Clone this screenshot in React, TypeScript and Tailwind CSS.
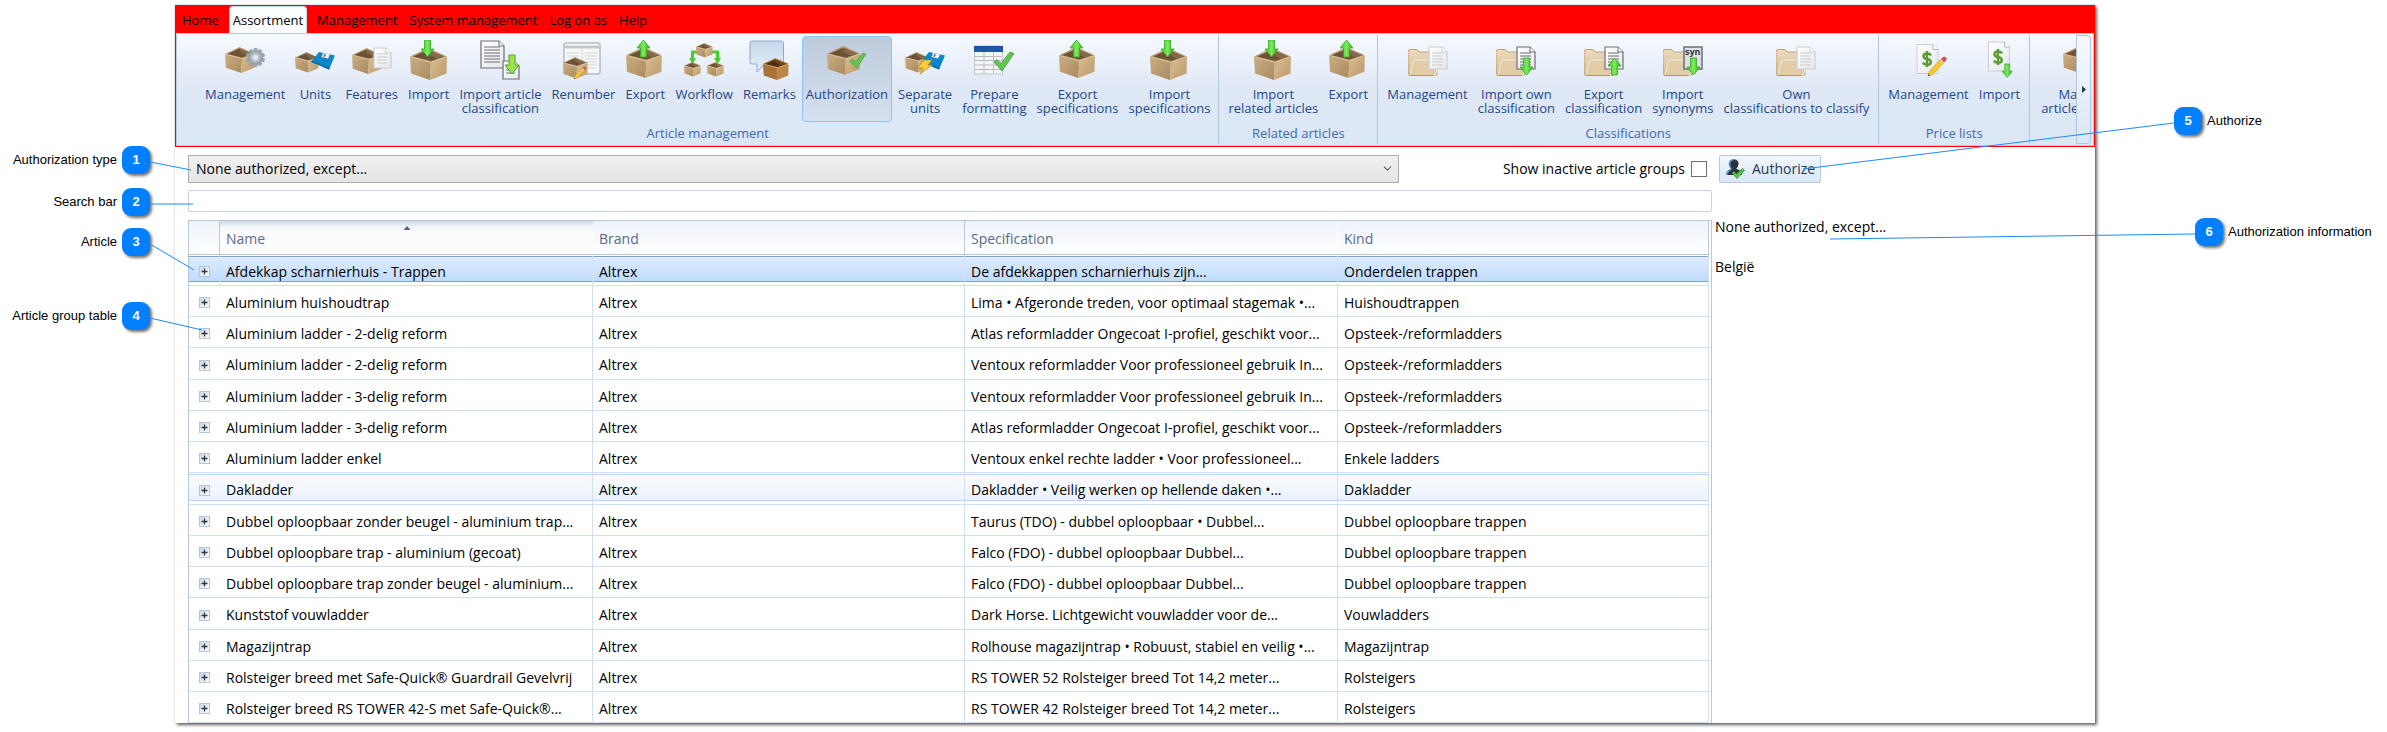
import React, { useState } from 'react';
import { ChevronDown } from 'lucide-react';

interface RibbonItem {
  label: string[];
  icon: React.ReactNode;
  active?: boolean;
}

interface RibbonGroup {
  title: string;
  items: RibbonItem[];
}

interface Article {
  name: string;
  specification: string;
  kind: string;
  state?: 'selected' | 'hover';
}

/* ---------- Icon parts, drawn on a 40x40 grid ---------- */

const IconDefs = () => (
  <svg className="absolute" width="0" height="0" aria-hidden="true">
    <defs>
      <linearGradient id="boxLeft" x1="0" y1="0" x2="1" y2="1">
        <stop offset="0" stopColor="#ccae82" />
        <stop offset="1" stopColor="#a98a5e" />
      </linearGradient>
      <linearGradient id="boxRight" x1="0" y1="0" x2="1" y2="1">
        <stop offset="0" stopColor="#d8bd92" />
        <stop offset="1" stopColor="#bd9a6b" />
      </linearGradient>
      <linearGradient id="green" x1="0" y1="0" x2="1" y2="0">
        <stop offset="0" stopColor="#3fc42a" />
        <stop offset="0.5" stopColor="#7bea5c" />
        <stop offset="1" stopColor="#2fae1c" />
      </linearGradient>
      <linearGradient id="folder" x1="0" y1="0" x2="0" y2="1">
        <stop offset="0" stopColor="#eddcbf" />
        <stop offset="1" stopColor="#d3b98f" />
      </linearGradient>
      <linearGradient id="bubble" x1="0" y1="0" x2="0" y2="1">
        <stop offset="0" stopColor="#c3d8ea" />
        <stop offset="1" stopColor="#e6f0f9" />
      </linearGradient>
      <linearGradient id="sheet" x1="0" y1="0" x2="1" y2="1">
        <stop offset="0" stopColor="#ffffff" />
        <stop offset="1" stopColor="#e4e6e8" />
      </linearGradient>
    </defs>
  </svg>
);

const Box = ({ x = 0, y = 0, s = 1, dark = false }: { x?: number; y?: number; s?: number; dark?: boolean }) => (
  <g transform={`translate(${x} ${y}) scale(${s})`}>
    <path d="M0 8.5 L18 0 L37 8.5 L21 14.5 Z" fill={dark ? '#b98345' : '#b99a6e'} />
    <path d="M3 8.6 L18 2 L34 8.6 L21 13 Z" fill={dark ? '#4a2e12' : '#6b5236'} />
    <path d="M18 2 L34 8.6 L27 11 L18 6 Z" fill={dark ? '#6d4720' : '#84694a'} />
    <path d="M0 8.5 L21 14.5 L20 32 L1 25.5 Z" fill={dark ? '#a8723a' : 'url(#boxLeft)'} />
    <path d="M37 8.5 L21 14.5 L20 32 L36.5 25.5 Z" fill={dark ? '#bd8447' : 'url(#boxRight)'} />
    <path d="M0 8.5 L21 14.5 L37 8.5" fill="none" stroke={dark ? '#d3a568' : '#dcc6a0'} strokeWidth="0.8" />
  </g>
);

const ArrowDown = ({ x, y, s = 1 }: { x: number; y: number; s?: number }) => (
  <path
    transform={`translate(${x} ${y}) scale(${s})`}
    d="M3.5 0 H9.5 V9 H13 L6.5 17 L0 9 H3.5 Z"
    fill="url(#green)"
    stroke="#35a821"
    strokeWidth="0.8"
  />
);

const ArrowUp = ({ x, y, s = 1 }: { x: number; y: number; s?: number }) => (
  <path
    transform={`translate(${x} ${y}) scale(${s})`}
    d="M3.5 17 H9.5 V8 H13 L6.5 0 L0 8 H3.5 Z"
    fill="url(#green)"
    stroke="#35a821"
    strokeWidth="0.8"
  />
);

const Sheet = ({ x, y, w, h, stroke = '#c9cdd1' }: { x: number; y: number; w: number; h: number; stroke?: string }) => {
  const lines = [];
  for (let ly = y + 6; ly < y + h - 3; ly += 3) lines.push(ly);
  return (
    <g>
      <path
        d={`M${x} ${y} H${x + w - 5} L${x + w} ${y + 5} V${y + h} H${x} Z`}
        fill="url(#sheet)"
        stroke={stroke}
        strokeWidth="1.2"
      />
      <path d={`M${x + w - 5} ${y} V${y + 5} H${x + w}`} fill="#ffffff" stroke={stroke} />
      {lines.map((ly) => (
        <path key={ly} d={`M${x + 3} ${ly} H${x + w - 4}`} stroke={stroke} strokeWidth="1" />
      ))}
    </g>
  );
};

const Floppy = () => (
  <g>
    <path d="M24 12 L40 15.5 L34 29.5 L28 27 L27 25 L16 22 Z" fill="#0b86c9" />
    <path d="M16 22 L34 29.5 L35 28 L17 20.5 Z" fill="#0a6ca6" />
    <path d="M28 13 L35 14.5 L33 18.5 L26.5 17 Z" fill="#eef4f8" />
    <path d="M29 14 L31 14.5 L30 17 L28 16.5 Z" fill="#c4545c" />
  </g>
);

const Check = ({ x, y, s = 1 }: { x: number; y: number; s?: number }) => (
  <path
    transform={`translate(${x} ${y}) scale(${s})`}
    d="M0 10 L3 7.5 L7 11.5 L16 0 L20 1.5 L8 19 Z"
    fill="#62c653"
    stroke="#3f9a3c"
    strokeWidth="0.8"
  />
);

const Pencil = ({ x, y }: { x: number; y: number }) => (
  <g transform={`translate(${x} ${y})`}>
    <path d="M0 20 L1.5 15 L13 3 L16 6.5 L4.5 18.5 Z" fill="#f5c92f" stroke="#c49a1c" strokeWidth="0.6" />
    <path d="M13 3 L15 1 Q17 0 18.5 2 Q19 3.5 18 4.5 L16 6.5 Z" fill="#dd4a50" />
    <path d="M12 4 L13 3 L16 6.5 L15 7.5 Z" fill="#cfd5da" />
    <path d="M0 20 L0.5 18 L2 19.5 Z" fill="#333333" />
  </g>
);

const Folder = () => (
  <g>
    <path d="M0 12 Q0 9.5 2 9.5 H9 L11 12 H29 V35 H2 Q0 35 0 33 Z" fill="url(#folder)" stroke="#bfa277" />
    <path d="M5 22 Q5.5 20 7.5 20 H31 L28 33.5 Q27.5 35.5 25 35.5 H2 Z" fill="#e2cca6" stroke="#f8efdf" />
    <path d="M1 35.5 H26" stroke="#b3956a" />
  </g>
);

const Dollar = ({ x, y }: { x: number; y: number }) => (
  <path
    transform={`translate(${x} ${y})`}
    d="M5 0 V16 M9 4.5 Q8 2.5 5 2.5 Q1.5 2.5 1.5 5.2 Q1.5 7.5 5 8 Q8.8 8.6 8.8 11 Q8.8 13.7 5 13.7 Q2 13.7 1 11.5"
    fill="none"
    stroke="#5b9a35"
    strokeWidth="2.4"
  />
);

const Gear = () => (
  <g fill="#9aa5ad">
    {[0, 36, 72, 108, 144].map((a) => (
      <rect key={a} x="28.5" y="8" width="4" height="19" rx="1" transform={`rotate(${a} 30.5 17.5)`} />
    ))}
    <circle cx="30.5" cy="17.5" r="7.5" />
    <circle cx="30.5" cy="17.5" r="5" fill="#b9c2c8" />
    <circle cx="30.5" cy="17.5" r="2.5" fill="#e5ebf1" />
  </g>
);

const Icon = ({ children }: { children: React.ReactNode }) => (
  <svg className="w-10 h-10 shrink-0" viewBox="0 0 40 40" aria-hidden="true">
    {children}
  </svg>
);

const importIcon = <Icon><Box x={1} y={8} /><ArrowDown x={12} y={0} /></Icon>;
const exportIcon = <Icon><Box x={1} y={7} s={0.97} /><ArrowUp x={12} y={0} /></Icon>;

const groups: RibbonGroup[] = [
  {
    title: 'Article management',
    items: [
      { label: ['Management'], icon: <Icon><Box y={7} s={0.81} /><Gear /></Icon> },
      { label: ['Units'], icon: <Icon><Box y={12} s={0.64} /><Floppy /></Icon> },
      { label: ['Features'], icon: <Icon><Box y={8} s={0.81} /><Sheet x={22} y={8} w={17} h={20} /></Icon> },
      { label: ['Import'], icon: importIcon },
      {
        label: ['Import article', 'classification'],
        icon: (
          <Icon>
            <Sheet x={1} y={1} w={23} h={27} stroke="#6b6f73" />
            <Sheet x={23} y={21} w={16} h={18} stroke="#6b6f73" />
            <path d="M29 15 H35 V25 H39 L32 34 L25 25 H29 Z" fill="#9be24f" stroke="#57a41f" />
          </Icon>
        ),
      },
      {
        label: ['Renumber'],
        icon: (
          <Icon>
            <rect x="1" y="3" width="36" height="31" rx="2" fill="#f7f8f9" stroke="#b8bcc0" strokeWidth="1.5" />
            <path d="M2 7 H37" stroke="#c6cacd" strokeWidth="3" />
            <path d="M19 9 V33 M4 13 H16 M4 16 H16 M22 13 H34 M22 16 H34 M22 19 H34 M22 22 H34 M22 25 H34 M22 28 H34" stroke="#cfd2d5" />
            <Box x={0} y={17} s={0.67} />
            <g transform="translate(11 26) scale(0.65)"><Pencil x={0} y={0} /></g>
          </Icon>
        ),
      },
      { label: ['Export'], icon: exportIcon },
      {
        label: ['Workflow'],
        icon: (
          <Icon>
            <path d="M13 12 H8.5 V21 M28 12 H33.5 V21" fill="none" stroke="#45cf2b" strokeWidth="3" />
            <path d="M5 18 H12 L8.5 24 Z M30 18 H37 L33.5 24 Z" fill="#45cf2b" />
            <Box x={12} y={3} s={0.45} />
            <Box x={0} y={22} s={0.45} />
            <Box x={23} y={22} s={0.45} />
          </Icon>
        ),
      },
      {
        label: ['Remarks'],
        icon: (
          <Icon>
            <path
              d="M3 1 H32 Q34.5 1 34.5 3 V22 Q34.5 24 32 24 H15 L8 32 V24 H3 Q1 24 1 22 V3 Q1 1 3 1 Z"
              fill="url(#bubble)"
              stroke="#8fa9c6"
            />
            <Box x={14} y={18} s={0.69} dark />
          </Icon>
        ),
      },
      {
        label: ['Authorization'],
        active: true,
        icon: <Icon><Box x={0} y={6} s={0.9} /><Check x={23} y={13} s={0.8} /></Icon>,
      },
      {
        label: ['Separate', 'units'],
        icon: (
          <Icon>
            <Box y={12} s={0.64} />
            <Floppy />
            <path d="M18 20 L27 20 L23 25 L27 25 L15 34 L18 28 L13 28 Z" fill="#f8cf3c" stroke="#b98a1c" strokeWidth="0.8" />
          </Icon>
        ),
      },
      {
        label: ['Prepare', 'formatting'],
        icon: (
          <Icon>
            <rect x="0.5" y="6" width="28" height="28" fill="#f3f4f5" stroke="#c3c6c9" />
            <path d="M0 16.5 H28 M0 20.5 H28 M0 25 H28 M0 29.5 H28 M10 12 V34 M19.5 12 V34" stroke="#b9bdc1" />
            <rect x="0" y="6" width="29" height="6" fill="#1f56a5" />
            <Check x={20} y={12} />
          </Icon>
        ),
      },
      { label: ['Export', 'specifications'], icon: exportIcon },
      { label: ['Import', 'specifications'], icon: importIcon },
    ],
  },
  {
    title: 'Related articles',
    items: [
      { label: ['Import', 'related articles'], icon: importIcon },
      { label: ['Export'], icon: exportIcon },
    ],
  },
  {
    title: 'Classifications',
    items: [
      { label: ['Management'], icon: <Icon><Folder /><Sheet x={21} y={7} w={18} h={22} /></Icon> },
      {
        label: ['Import own', 'classification'],
        icon: <Icon><Folder /><Sheet x={21} y={7} w={18} h={22} stroke="#6b6f73" /><ArrowDown x={24} y={18} /></Icon>,
      },
      {
        label: ['Export', 'classification'],
        icon: <Icon><Folder /><Sheet x={21} y={7} w={18} h={22} stroke="#6b6f73" /><ArrowUp x={24} y={18} /></Icon>,
      },
      {
        label: ['Import', 'synonyms'],
        icon: (
          <Icon>
            <Folder />
            <rect x="21" y="7" width="18" height="22" fill="#dfe2e4" stroke="#6b6f73" strokeWidth="1.5" />
            <text x="22" y="15" fontSize="9" fontWeight="700" fill="#33373a">syn</text>
            <ArrowDown x={24} y={18} />
          </Icon>
        ),
      },
      {
        label: ['Own', 'classifications to classify'],
        icon: <Icon><Folder /><Sheet x={21} y={7} w={18} h={22} /></Icon>,
      },
    ],
  },
  {
    title: 'Price lists',
    items: [
      {
        label: ['Management'],
        icon: (
          <Icon>
            <path d="M8 4.5 H24 L29 9.5 V33.5 H8 Z" fill="url(#sheet)" stroke="#c9cdd1" />
            <path d="M24 4.5 V9.5 H29" fill="#ffffff" stroke="#b4b8bc" />
            <Dollar x={13} y={11} />
            <Pencil x={19} y={16} />
          </Icon>
        ),
      },
      {
        label: ['Import'],
        icon: (
          <Icon>
            <path d="M9.5 2 H25.5 L30.5 7 V31 H9.5 Z" fill="url(#sheet)" stroke="#c9cdd1" />
            <path d="M25.5 2 V7 H30.5" fill="#ffffff" stroke="#b4b8bc" />
            <Dollar x={14} y={9} />
            <ArrowDown x={23} y={24} s={0.8} />
          </Icon>
        ),
      },
    ],
  },
];

const articles: Article[] = [
  { name: 'Afdekkap scharnierhuis - Trappen', specification: 'De afdekkappen scharnierhuis zijn...', kind: 'Onderdelen trappen', state: 'selected' },
  { name: 'Aluminium huishoudtrap', specification: 'Lima • Afgeronde treden, voor optimaal stagemak •...', kind: 'Huishoudtrappen' },
  { name: 'Aluminium ladder - 2-delig reform', specification: 'Atlas reformladder Ongecoat I-profiel, geschikt voor...', kind: 'Opsteek-/reformladders' },
  { name: 'Aluminium ladder - 2-delig reform', specification: 'Ventoux reformladder Voor professioneel gebruik In...', kind: 'Opsteek-/reformladders' },
  { name: 'Aluminium ladder - 3-delig reform', specification: 'Ventoux reformladder Voor professioneel gebruik In...', kind: 'Opsteek-/reformladders' },
  { name: 'Aluminium ladder - 3-delig reform', specification: 'Atlas reformladder Ongecoat I-profiel, geschikt voor...', kind: 'Opsteek-/reformladders' },
  { name: 'Aluminium ladder enkel', specification: 'Ventoux enkel rechte ladder • Voor professioneel...', kind: 'Enkele ladders' },
  { name: 'Dakladder', specification: 'Dakladder • Veilig werken op hellende daken •...', kind: 'Dakladder', state: 'hover' },
  { name: 'Dubbel oploopbaar zonder beugel - aluminium trap...', specification: 'Taurus (TDO) - dubbel oploopbaar • Dubbel...', kind: 'Dubbel oploopbare trappen' },
  { name: 'Dubbel oploopbare trap - aluminium (gecoat)', specification: 'Falco (FDO) - dubbel oploopbaar Dubbel...', kind: 'Dubbel oploopbare trappen' },
  { name: 'Dubbel oploopbare trap zonder beugel - aluminium...', specification: 'Falco (FDO) - dubbel oploopbaar Dubbel...', kind: 'Dubbel oploopbare trappen' },
  { name: 'Kunststof vouwladder', specification: 'Dark Horse. Lichtgewicht vouwladder voor de...', kind: 'Vouwladders' },
  { name: 'Magazijntrap', specification: 'Rolhouse magazijntrap • Robuust, stabiel en veilig •...', kind: 'Magazijntrap' },
  { name: 'Rolsteiger breed met Safe-Quick® Guardrail Gevelvrij', specification: 'RS TOWER 52 Rolsteiger breed Tot 14,2 meter...', kind: 'Rolsteigers' },
  { name: 'Rolsteiger breed RS TOWER 42-S met Safe-Quick®...', specification: 'RS TOWER 42 Rolsteiger breed Tot 14,2 meter...', kind: 'Rolsteigers' },
];

const tabs = ['Home', 'Assortment', 'Management', 'System management', 'Log on as', 'Help'];

const RibbonButton = ({ item }: { item: RibbonItem }) => (
  <button
    className={`flex flex-col items-center h-[86px] pt-[3px] rounded-sm border text-[13px] leading-[14px] text-[#1e478c] whitespace-nowrap ${
      item.active
        ? 'mx-px px-[3px] border-[#8fc1f7] bg-linear-to-b from-[#becbdb] to-[#d5e1ef]'
        : 'px-1 border-transparent'
    }`}
  >
    {item.icon}
    <span className="mt-[7px]">
      {item.label.map((line) => (
        <span key={line} className="block">{line}</span>
      ))}
    </span>
  </button>
);

const Ribbon = () => {
  const [activeTab, setActiveTab] = useState('Assortment');

  return (
    <header className="bg-[#ff0000] border border-[#ff0000] h-[142px] flex flex-col">
      <nav className="flex h-[27px] shrink-0 text-[13px] leading-[18px]">
        {tabs.map((tab) => (
          <button
            key={tab}
            onClick={() => setActiveTab(tab)}
            className={
              tab === activeTab
                ? 'mx-1 px-[3px] bg-[#fbfdff] rounded-t border border-b-0 border-[#c9d6e6] text-black'
                : 'px-[6px] text-black'
            }
          >
            {tab}
          </button>
        ))}
      </nav>

      <div className="flex flex-1 min-h-0 border border-[#b9c9de] bg-linear-to-b from-[#f6faff] via-[#dfe8f5] to-[#dae7f5]">
        <div className="flex flex-1 min-w-0 overflow-hidden pl-[23px] py-px">
          {groups.map((group) => (
            <section
              key={group.title}
              className="shrink-0 flex flex-col items-center px-1 first:pl-0 first:pr-[3px] border-r border-[#b4c5db]"
            >
              <div className="flex pt-px">
                {group.items.map((item, i) => (
                  <RibbonButton key={i} item={item} />
                ))}
              </div>
              <h2 className="mt-[2px] text-[13px] leading-[18px] text-[#4369a8]">{group.title}</h2>
            </section>
          ))}
          <section className="shrink-0 flex px-[6px] pt-px">
            <RibbonButton item={{ label: ['Manage', 'article groups'], icon: <Icon><Box y={7} s={0.81} /></Icon> }} />
          </section>
        </div>
        <button aria-label="Scroll ribbon" className="w-[15px] my-px mr-[2px] flex justify-center pt-[50px] rounded-r border border-[#b4c5db] bg-linear-to-b from-[#f6faff] to-[#dae7f5]">
          <svg className="w-1 h-[7px]" viewBox="0 0 4 7" aria-hidden="true">
            <path d="M0 0 L4 3.5 L0 7 Z" fill="#1f3556" />
          </svg>
        </button>
      </div>
    </header>
  );
};

const ExpandButton = ({ name }: { name: string }) => (
  <button
    aria-label={`Expand ${name}`}
    className="block mx-auto w-[11px] h-[11px] border border-[#b3c5dd] bg-linear-to-br from-[#c9d8ec] to-[#ffffff]"
  >
    <svg className="w-[9px] h-[9px]" viewBox="0 0 9 9" aria-hidden="true">
      <path d="M1.5 4.5 H7.5 M4.5 1.5 V7.5" stroke="#33373c" strokeWidth="1.3" />
    </svg>
  </button>
);

const rowStyle = {
  selected:
    'bg-[linear-gradient(to_bottom,#fff_1px,#7da2ce_1px_2px,#ebf4fd_2px_3px,#dcebfc_3px,#c1dbfc_26px,#7da2ce_26px_27px,#fff_27px)]',
  hover:
    'bg-[linear-gradient(to_bottom,#fff_1px,#b8d6fb_1px_2px,#fafcfe_2px,#ebf3fd_27px,#b8d6fb_27px_28px,#fff_28px)]',
};

const ArticleTable = () => (
  <div className="mt-2 pr-[2px] border border-b-0 border-[#b7c7dc]">
    <table className="w-full table-fixed border-separate border-spacing-0 text-sm text-left">
      <colgroup>
        <col className="w-[31px]" />
        <col className="w-[373px]" />
        <col className="w-[372px]" />
        <col className="w-[373px]" />
        <col />
      </colgroup>
      <thead className="text-[#5a6b85]">
        <tr className="h-[34px]">
          <th aria-label="Expand" className="border-r border-b border-[#b7c7dc] bg-linear-to-b from-[#eef3fc] to-white" />
          <th className="relative pl-[6px] pt-[3px] font-normal border-b border-[#b7c7dc] bg-[linear-gradient(to_bottom,#ccd7e4,#f3f5f9_6px,#fcfcfd_12px)]">
            Name
            <svg className="absolute left-1/2 -translate-x-1/2 top-[5px] w-[7px] h-1" viewBox="0 0 7 4" aria-hidden="true">
              <path d="M0 4 L3.5 0 L7 4 Z" fill="#51627c" />
            </svg>
          </th>
          <th className="pl-[6px] pt-[3px] font-normal border-r border-b border-[#b7c7dc] bg-linear-to-b from-[#eef3fc] to-white">Brand</th>
          <th className="pl-[6px] pt-[3px] font-normal border-r border-r-white border-b border-b-[#b7c7dc] bg-linear-to-b from-[#eef3fc] to-white">Specification</th>
          <th className="pl-[6px] pt-[3px] font-normal border-r border-b border-[#b7c7dc] bg-linear-to-b from-[#eef3fc] to-white">Kind</th>
        </tr>
      </thead>
      <tbody className="text-black whitespace-nowrap [&_td]:border-[#cfdff4] [&_td]:border-b [&_td]:pt-[3px] [&_td]:pb-0">
        {articles.map((article, i) => {
          const cell = article.state ? rowStyle[article.state] : '';
          return (
            <tr key={i} className="h-[31px] [&:nth-child(4n)]:h-8">
              <td className={article.state === 'selected' ? `${cell} border-r border-r-[#9dbde6]` : cell}>
                <ExpandButton name={article.name} />
              </td>
              <td className={`pl-[6px] border-r ${cell}`}>{article.name}</td>
              <td className={`pl-[6px] border-r ${cell}`}>Altrex</td>
              <td className={`pl-[6px] border-r ${cell}`}>{article.specification}</td>
              <td className={`pl-[6px] border-r ${cell}`}>{article.kind}</td>
            </tr>
          );
        })}
      </tbody>
    </table>
  </div>
);

const AuthorizePanel = () => (
  <aside className="w-[383px] shrink-0 pl-[7px] pt-2 text-sm text-black">
    <button className="flex items-center gap-[7px] h-7 px-[5px] rounded-xs border border-[#b4c8e2] bg-linear-to-b from-[#f2f7fd] to-[#d9e7f6] text-[#1e395b]">
      <svg className="w-5 h-5" viewBox="0 0 20 20" aria-hidden="true">
        <path d="M1 16 Q1 11 6 10 Q3 7 4 3 Q5 0 9 0 Q13 0 13 4 Q13 8 10.5 10 Q15 11 15 16 Z" fill="#4f8fc9" />
        <path d="M3 16 Q3 12 7 10.5 Q5 7 5.5 4 Q7 1 10 1 Q14 1.5 13.5 5 Q13 8.5 11 10 Q17 11 17 16 Z" fill="#2b3138" />
        <path d="M7 14 L9 12.5 L11.5 15 L17.5 9.5 L19.5 11.5 L12 19.5 Z" fill="#5cc24f" stroke="#2f8a2e" strokeWidth="0.8" />
      </svg>
      Authorize
    </button>
    <div className="-ml-1 mt-[34px] leading-5">
      <p>None authorized, except...</p>
      <p className="mt-5">België</p>
    </div>
  </aside>
);

interface CalloutProps {
  number: number;
  label: string;
  side: 'left' | 'right';
  /* end of the pointer line, measured from the badge's inner edge and middle */
  dx: number;
  dy: number;
  className: string;
}

const Callout = ({ number, label, side, dx, dy, className }: CalloutProps) => (
  <div
    className={`absolute z-10 flex items-center gap-[5px] text-[13px] leading-4 text-black whitespace-nowrap ${
      side === 'left' ? 'right-[25px]' : 'flex-row-reverse'
    } ${className}`}
  >
    <span>{label}</span>
    <span className="relative flex items-center justify-center w-7 h-7 rounded-[9px] bg-[#0080ff] text-white font-bold shadow-[2px_2px_3px_rgba(0,0,0,0.55)]">
      {number}
      <svg
        className={`absolute top-1/2 w-px h-px overflow-visible pointer-events-none ${side === 'left' ? 'left-full' : 'left-0'}`}
        aria-hidden="true"
      >
        <line x1="0" y1="2" x2={dx} y2={dy} stroke="#1a8cff" />
      </svg>
    </span>
  </div>
);

const App: React.FC = () => {
  const [type, setType] = useState('none');
  const [search, setSearch] = useState('');
  const [showInactive, setShowInactive] = useState(false);

  return (
    <div className="flex bg-white pt-[5px] pb-[9px] font-['Open_Sans',sans-serif]">
      <IconDefs />

      {/* Left callouts */}
      <div className="relative w-[175px] shrink-0 font-['Liberation_Sans',sans-serif]">
        <Callout side="left" number={1} label="Authorization type" dx={41} dy={10} className="top-[141px]" />
        <Callout side="left" number={2} label="Search bar" dx={43} dy={2} className="top-[183px]" />
        <Callout side="left" number={3} label="Article" dx={44} dy={28} className="top-[223px]" />
        <Callout side="left" number={4} label="Article group table" dx={52} dy={14} className="top-[297px]" />
      </div>

      {/* Application window */}
      <main className="flex-1 min-w-0 bg-white shadow-[2px_2px_3px_rgba(0,0,0,0.6),0_0_2px_rgba(0,0,0,0.2)]">
        <Ribbon />
        <div className="flex pl-[13px]">
          <div className="flex-1 min-w-0 pt-2">
            <div className="flex items-center justify-between">
              <div className="relative w-[1211px]">
                <select
                  aria-label="Authorization type"
                  value={type}
                  onChange={(e) => setType(e.target.value)}
                  className="block w-full h-7 pl-[7px] text-sm text-black appearance-none border border-[#acacac] bg-linear-to-b from-[#f0f0f0] to-[#e5e5e5]"
                >
                  <option value="none">None authorized, except...</option>
                  <option value="all">All authorized, except...</option>
                </select>
                <ChevronDown className="absolute right-[5px] top-[7px] pointer-events-none text-[#606060]" size={13} />
              </div>
              <label className="flex items-center gap-[6px] mr-[5px] text-sm text-black">
                Show inactive article groups
                <input
                  type="checkbox"
                  checked={showInactive}
                  onChange={(e) => setShowInactive(e.target.checked)}
                  className="appearance-none w-4 h-4 border border-[#707070] bg-white checked:bg-[#4369a8]"
                />
              </label>
            </div>
            <input
              type="text"
              aria-label="Search bar"
              value={search}
              onChange={(e) => setSearch(e.target.value)}
              className="block w-full h-[22px] mt-[7px] px-1 text-sm rounded-xs border border-[#c3d2e6]"
            />
            <ArticleTable />
          </div>
          <AuthorizePanel />
        </div>
      </main>

      {/* Right callouts */}
      <div className="relative w-[292px] shrink-0 font-['Liberation_Sans',sans-serif]">
        <Callout side="right" number={5} label="Authorize" dx={-371} dy={48} className="left-[79px] top-[102px]" />
        <Callout side="right" number={6} label="Authorization information" dx={-365} dy={7} className="left-[100px] top-[213px]" />
      </div>
    </div>
  );
};

export default App;
